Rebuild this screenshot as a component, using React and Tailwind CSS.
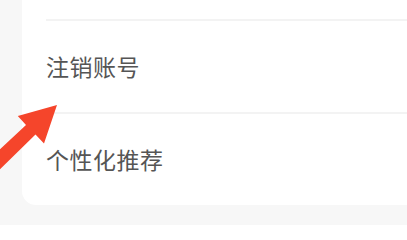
export default function App() {
  const font = { fontFamily: '"Noto Sans CJK SC", "Noto Sans", sans-serif' };
  return (
    <div className="relative w-[407px] h-[225px] overflow-hidden bg-[#f7f7f7]" style={font}>
      <div className="ml-[22px] w-[420px] h-[205px] bg-white rounded-bl-[14px] flex flex-col">
        <div className="h-[19px]" />
        <div className="ml-[24px] h-[93px] border-t-2 border-[#f3f3f3] flex items-center">
          <span className="text-[23px] leading-none text-[#555555] tracking-[0.5px]">注销账号</span>
        </div>
        <div className="ml-[24px] h-[93px] border-t-2 border-[#f3f3f3] flex items-center">
          <span className="text-[23px] leading-none text-[#555555] tracking-[0.5px]">个性化推荐</span>
        </div>
      </div>
      <svg className="absolute left-0 top-0" width="407" height="225" viewBox="0 0 407 225">
        <polygon
          points="57,105 17.8,116 26,125 -20,168 -10,179 35.5,134.5 44,143.6"
          fill="#f5452b"
        />
      </svg>
    </div>
  );
}
